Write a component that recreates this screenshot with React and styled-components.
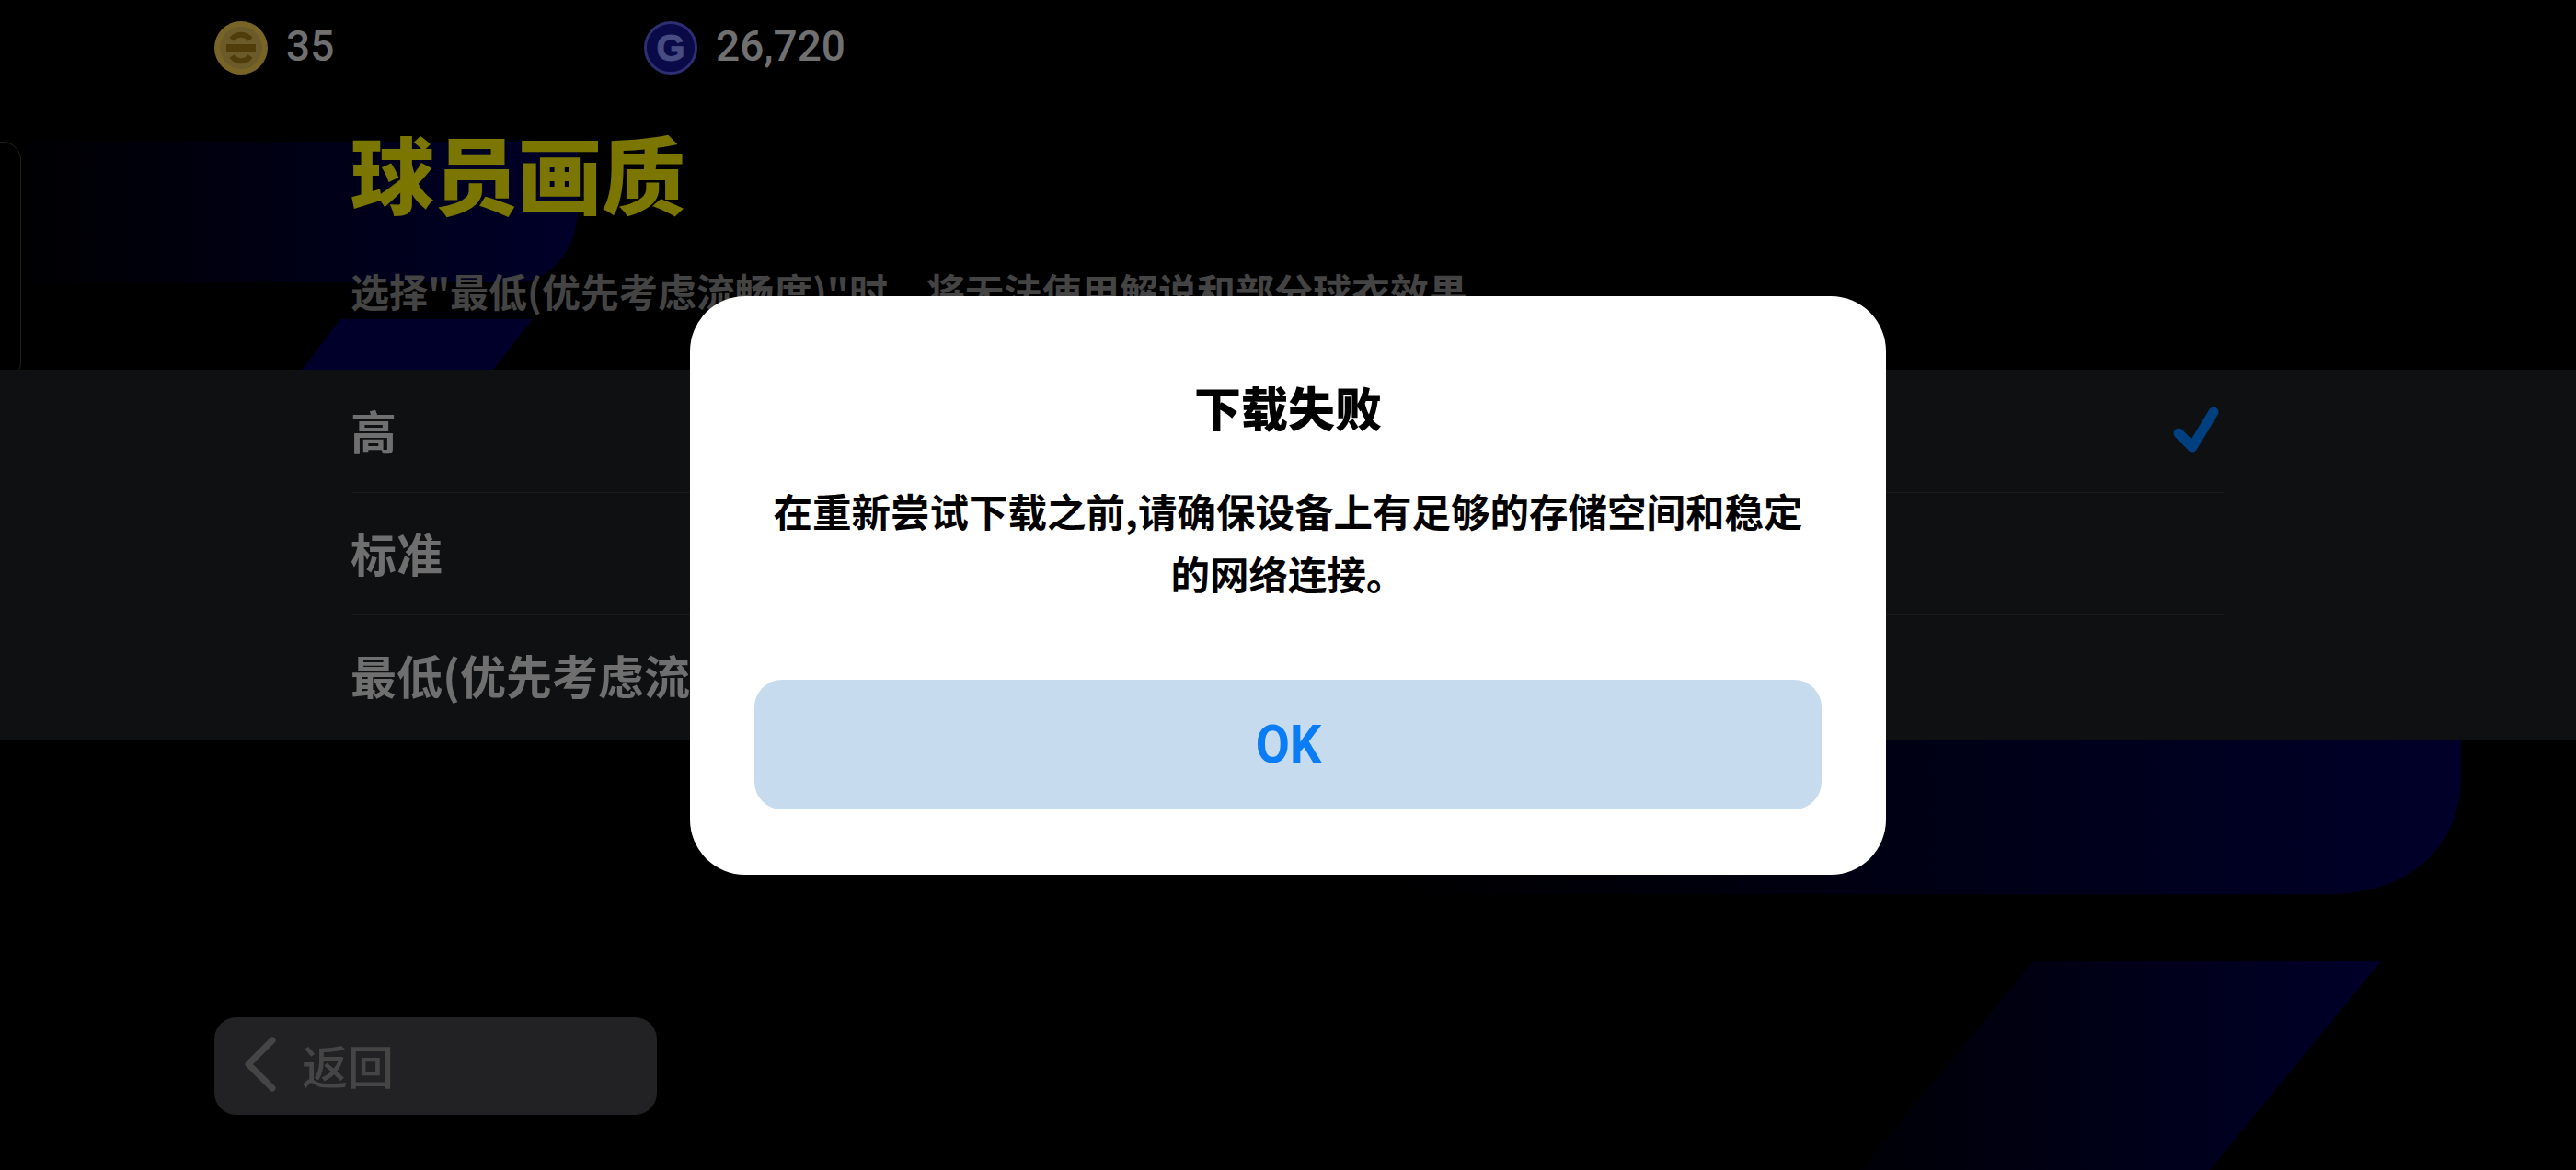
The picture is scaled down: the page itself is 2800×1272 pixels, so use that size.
import React from "react";
import styled, { createGlobalStyle } from "styled-components";

const cjk = `"Noto Sans CJK SC", "Noto Sans", sans-serif`;
const latin = `Roboto, "Noto Sans CJK SC", sans-serif`;

const Global = createGlobalStyle`
  html, body {
    margin: 0;
    background: #000;
  }
`;

const Page = styled.div`
  position: relative;
  width: 2800px;
  height: 1272px;
  overflow: hidden;
  background: #000;
  font-family: ${cjk};
`;

const Backdrop = styled.svg`
  position: absolute;
  inset: 0;
`;

const Content = styled.div`
  position: relative;
  display: flex;
  flex-direction: column;
`;

const TopBar = styled.div`
  display: flex;
  height: 141px;
  padding: 23px 0 0 233px;
  box-sizing: border-box;
`;

const Stat = styled.div`
  display: flex;
  align-items: flex-start;
  gap: 20px;
  width: 467px;
  font-family: ${latin};
  font-size: 46px;
  line-height: 54px;
  font-weight: 500;
  color: #707070;
`;

const Heading = styled.div`
  padding-left: 381px;
  height: 261px;
`;

const Title = styled.h1`
  margin: 0;
  font-size: 91px;
  line-height: 90px;
  font-weight: 900;
  color: #7a7600;
`;

const Hint = styled.p`
  margin: 61px 0 0;
  font-size: 42px;
  line-height: 48px;
  font-weight: 700;
  color: #444;
`;

const Band = styled.div`
  background: #0e1012;
  padding: 0 383px;
`;

const Row = styled.div`
  display: flex;
  align-items: center;
  justify-content: space-between;
  box-sizing: border-box;
  height: 133px;
  padding-bottom: 4px;
  font-size: 50px;
  font-weight: 700;
  color: #6f6f6f;
  & + & {
    border-top: 1px solid #1a1b1d;
  }
  &:last-child {
    height: 137px;
    padding-bottom: 8px;
  }
`;

const RowLabel = styled.span`
  margin-left: -2px;
`;

const BackButton = styled.div`
  display: flex;
  align-items: center;
  gap: 27px;
  width: 481px;
  height: 106px;
  margin: 301px 0 0 233px;
  padding: 0 0 4px 32px;
  box-sizing: border-box;
  border-radius: 24px;
  background: #222224;
  font-size: 50px;
  font-weight: 500;
  color: #454545;
`;

const SideTab = styled.div`
  position: absolute;
  left: -30px;
  top: 154px;
  width: 51px;
  height: 258px;
  border: 1px solid #1c2410;
  border-radius: 20px;
`;

const Overlay = styled.div`
  position: absolute;
  inset: 0;
  display: flex;
  align-items: center;
  justify-content: center;
`;

const Modal = styled.div`
  box-sizing: border-box;
  width: 1300px;
  height: 629px;
  padding: 90px 70px 0;
  border-radius: 60px;
  background: #fff;
  color: #000;
  text-align: center;
`;

const ModalTitle = styled.h2`
  margin: 0;
  font-size: 51px;
  line-height: 60px;
  font-weight: 900;
`;

const ModalBody = styled.p`
  margin: 49px 0 0;
  padding: 0 14px;
  font-size: 42.5px;
  line-height: 68px;
  font-weight: 700;
`;

const OkButton = styled.button`
  display: block;
  width: 100%;
  height: 141px;
  margin-top: 82px;
  border: 0;
  border-radius: 30px;
  background: #c7dbef;
  color: #0a7cf5;
  font-family: ${latin};
  font-size: 58px;
  font-weight: 700;
`;

const OkLabel = styled.span`
  display: inline-block;
  transform: scaleX(0.93);
`;

const CheckMark = styled.svg`
  margin-right: 5px;
`;

const GoldCoin = () => (
  <svg width="58" height="58" viewBox="0 0 58 58">
    <circle cx="29" cy="29" r="29" fill="#786426" />
    <circle cx="29" cy="29" r="23" fill="#6b5a2a" />
    <rect x="13" y="25" width="32" height="8" fill="#4f3e0c" />
    <path d="M19 20a12 12 0 0 1 20 0M19 38a12 12 0 0 0 20 0" fill="none" stroke="#4f3e0c" strokeWidth="6" />
  </svg>
);

const GemCoin = () => (
  <svg width="58" height="58" viewBox="0 0 58 58">
    <circle cx="29" cy="29" r="27.5" fill="#0a0a48" stroke="#2e2e72" strokeWidth="3" />
    <text
      x="29"
      y="43"
      textAnchor="middle"
      fontFamily="Liberation Sans, sans-serif"
      fontWeight="700"
      fontSize="40"
      stroke="#474c82"
      strokeWidth="1"
      fill="#474c82"
    >
      G
    </text>
  </svg>
);

const Check = () => (
  <CheckMark width="50" height="52" viewBox="0 0 50 52">
    <path d="M6 30 L21 45 L44 7" fill="none" stroke="#003f80" strokeWidth="11" strokeLinecap="round" strokeLinejoin="round" />
  </CheckMark>
);

const Chevron = () => (
  <svg width="36" height="60" viewBox="0 0 36 60">
    <path d="M31 4 L5 30 L31 56" fill="none" stroke="#454545" strokeWidth="7" strokeLinecap="round" strokeLinejoin="round" />
  </svg>
);

export default function App() {
  return (
    <Page>
      <Global />
      <Backdrop width="2800" height="1272">
        <defs>
          <linearGradient id="leftFade" gradientUnits="userSpaceOnUse" x1="0" y1="0" x2="630" y2="0">
            <stop offset="0" stopColor="#000" />
            <stop offset="1" stopColor="#00002a" />
          </linearGradient>
          <linearGradient id="rightFade" gradientUnits="userSpaceOnUse" x1="1500" y1="0" x2="2675" y2="0">
            <stop offset="0" stopColor="#000" />
            <stop offset="1" stopColor="#00002a" />
          </linearGradient>
          <linearGradient id="slantFade" gradientUnits="userSpaceOnUse" x1="2020" y1="0" x2="2590" y2="0">
            <stop offset="0" stopColor="#000006" />
            <stop offset="1" stopColor="#00002a" />
          </linearGradient>
        </defs>
        <path d="M0 154H628V225C628 270 600 307 560 307H0Z" fill="url(#leftFade)" />
        <path d="M370 347H579L536 402H328Z" fill="#00002a" />
        <path d="M1500 800H2675V845C2675 920 2620 972 2530 972H1500Z" fill="url(#rightFade)" />
        <path d="M2210 1045H2588L2402 1272H2023Z" fill="url(#slantFade)" />
      </Backdrop>
      <SideTab />
      <Content>
        <TopBar>
          <Stat><GoldCoin />35</Stat>
          <Stat><GemCoin />26,720</Stat>
        </TopBar>
        <Heading>
          <Title>球员画质</Title>
          <Hint>选择"最低(优先考虑流畅度)"时，将无法使用解说和部分球衣效果</Hint>
        </Heading>
        <Band>
          <Row><RowLabel>高</RowLabel><Check /></Row>
          <Row><RowLabel>标准</RowLabel></Row>
          <Row><RowLabel>最低(优先考虑流畅度)</RowLabel></Row>
        </Band>
        <BackButton><Chevron />返回</BackButton>
      </Content>
      <Overlay>
        <Modal>
          <ModalTitle>下载失败</ModalTitle>
          <ModalBody>在重新尝试下载之前,请确保设备上有足够的存储空间和稳定的网络连接。</ModalBody>
          <OkButton><OkLabel>OK</OkLabel></OkButton>
        </Modal>
      </Overlay>
    </Page>
  );
}
